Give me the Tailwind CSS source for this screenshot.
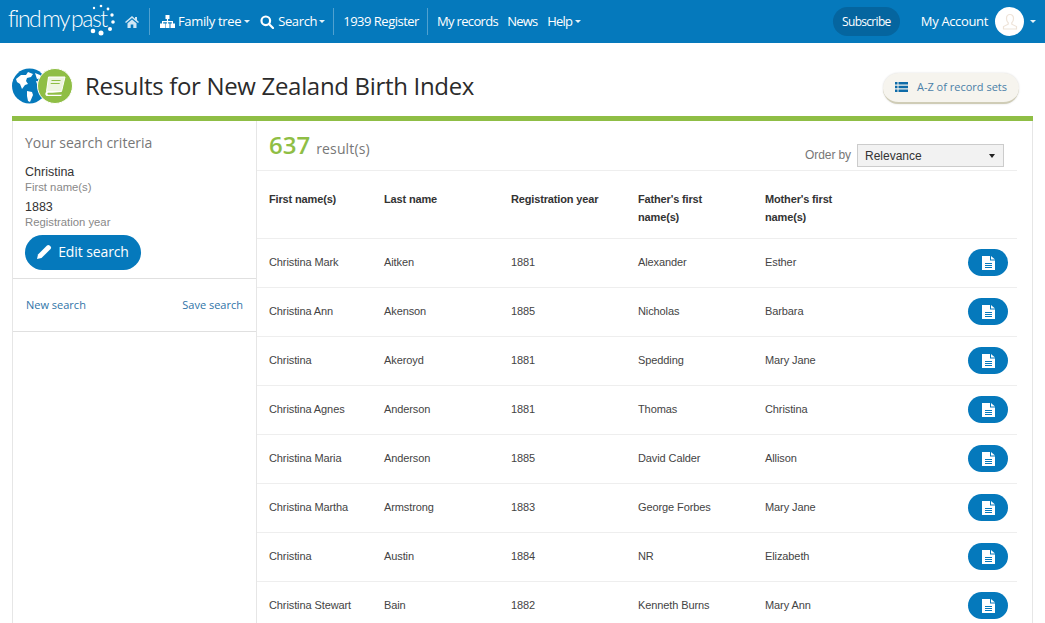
<!DOCTYPE html>
<html lang="en">

<head>
      <meta charset="UTF-8">
      <title>Results for New Zealand Birth Index</title>
      <script src="https://cdn.jsdelivr.net/npm/@tailwindcss/browser@4"></script>
</head>

<body class="bg-white h-[623px] overflow-hidden font-['Liberation_Sans',sans-serif]">
      <!-- Top nav -->
      <header class="h-[43px] bg-[#0579bc] flex items-center text-white font-['Open_Sans',sans-serif] text-[13px] tracking-[-0.35px] pl-2">
            <div class="flex items-center w-[108px] h-full relative">
                  <span class="font-['Lato',sans-serif] font-light text-[23px] tracking-[-1.5px] leading-none -mt-[6px]">find<span class="ml-[2px]">my</span><span class="ml-[2px]">past</span></span>
                  <svg class="absolute left-[80px] top-[2px]" width="30" height="36" viewBox="0 0 30 36" fill="#fff">
                        <circle cx="6" cy="6" r="1.200"/><circle cx="13" cy="4" r="1.300"/><circle cx="20" cy="7" r="1.400"/><circle cx="24" cy="13" r="1.700"/><circle cx="25" cy="20" r="1.800"/><circle cx="22" cy="27" r="2"/><circle cx="13" cy="31" r="2.500"/><circle cx="5" cy="29" r="2.300"/>
                  </svg>
            </div>
            <svg class="ml-[9px]" width="14" height="12" viewBox="0 0 14 12" fill="#cfe6f4"><path d="M7 0 0 6l1 1 6-5 6 5 1-1-2-1.700V1h-2v1.800zM2.500 7.300V12h3.200V8.500h2.600V12h3.200V7.300L7 3.500z"/></svg>
            <div class="w-px h-[27px] bg-white/30 ml-[10px]"></div>
            <svg class="ml-[10px]" width="15" height="13" viewBox="0 0 15 13" fill="#fff"><path d="M5.500 0h4v4h-4zM6.900 4h1.200v2h4.900v2.500h-1.200V7.200H8.100v1.300H6.900V7.200H3.200v1.300H2V6h4.900zM0 8.500h5V13H0zM5.500 8.500h4V13h-4zM10.500 8.500H15V13h-4.500z"/></svg>
            <span class="ml-[3px]">Family tree</span>
            <span class="ml-[3px] border-x-[3px] border-t-[3px] border-x-transparent border-t-white/90"></span>
            <svg class="ml-[10px]" width="14" height="14" viewBox="0 0 14 14" fill="none" stroke="#fff" stroke-width="2.200"><circle cx="5.800" cy="5.800" r="4.300"/><path d="m9 9 4 4" stroke-linecap="round"/></svg>
            <span class="ml-[4px]">Search</span>
            <span class="ml-[2px] border-x-[3px] border-t-[3px] border-x-transparent border-t-white/90"></span>
            <div class="w-px h-[27px] bg-white/30 ml-[8px]"></div>
            <span class="ml-[9px] tracking-[-0.5px]">1939 Register</span>
            <div class="w-px h-[27px] bg-white/30 ml-[8px]"></div>
            <span class="ml-[9px] tracking-[-0.65px]">My records</span>
            <span class="ml-[9px] tracking-[-0.8px]">News</span>
            <span class="ml-[10px] tracking-[-0.8px]">Help</span>
            <span class="ml-[3px] border-x-[3px] border-t-[3px] border-x-transparent border-t-white/90"></span>
            <div class="ml-auto flex items-center">
                  <span class="h-[29px] w-[67px] rounded-full bg-[#05659f] flex items-center justify-center text-[12px] tracking-[-0.7px]">Subscribe</span>
                  <span class="ml-[21px]">My Account</span>
                  <span class="ml-[7px] w-[29px] h-[29px] rounded-full bg-white flex items-center justify-center">
                        <svg width="16" height="18" viewBox="0 0 16 18" fill="none" stroke="#eee3d8" stroke-width="1.200"><path d="M8 1.500c-2.200 0-3.500 1.600-3.500 4 0 2 .8 3.500 1.700 4.300v1.400L1.500 13.500V16h13v-2.500l-4.700-2.300V9.800c.9-.8 1.700-2.300 1.700-4.300 0-2.400-1.300-4-3.500-4z"/></svg>
                  </span>
                  <span class="ml-[6px] mr-[9px] border-x-[3px] border-t-[3px] border-x-transparent border-t-white/90"></span>
            </div>
      </header>

      <!-- Title row -->
      <div class="h-[73px] pt-[12px] flex items-center pl-[12px] pr-[26px] font-['Open_Sans',sans-serif]">
            <div class="w-[61px] h-[36px]">
                  <svg width="61" height="36" viewBox="0 0 61 36">
                        <circle cx="17.500" cy="18" r="17.500" fill="#0579bc"/>
                        <path d="M4 11l5-4 5 0 2-3 5 2-2 3-4 1-1 3 2 3-3 1-3 4-2-5-3-2zM15 23l5 1 1 3-3 7-2-1-1-5zM23 5l5 2 2 3-5 1zM24 13l5 1 2 6-3 3-2-4z" fill="#fff"/>
                        <circle cx="43" cy="18" r="17.500" fill="#8fbe45" stroke="#fff" stroke-width="1"/>
                        <path d="M36.500 9H53l-3.500 14.500H34.500z" fill="#eef5e0" stroke="#fff" stroke-width="1"/>
                        <path d="M34.500 23.500q-2.500 2.500 0 4.500H49l1-1.300H36q-1.500-1 0-2h13.500z" fill="#fff"/>
                        <path d="M39.500 12.500h9M38.700 15.500h9" stroke="#8fbe45" stroke-width="1"/>
                  </svg>
            </div>
            <h1 class="ml-[12px] text-[24px] tracking-[-0.32px] text-[#2b2b2b] leading-none">Results for New Zealand Birth Index</h1>
            <div class="ml-auto mt-[5px] h-[31px] w-[136px] rounded-full bg-[#f6f4ee] border-b-2 border-[#cfccb6] shadow-[0_0_2px_rgba(0,0,0,0.15)] flex items-center justify-center text-[11px] text-[#4a80a8]">
                  <svg class="mr-[9px]" width="13" height="10" viewBox="0 0 13 10" fill="#0e6ba8"><path d="M0 0h2.500v2.500H0zM3.500 0H13v2.500H3.500zM0 3.700h2.500v2.500H0zM3.500 3.700H13v2.500H3.500zM0 7.400h2.500V10H0zM3.500 7.400H13V10H3.500z"/></svg>
                  A-Z of record sets
            </div>
      </div>

      <!-- Results panel -->
      <div class="mx-[12px] border-t-[5px] border-[#8fbe45] flex h-[507px] overflow-hidden">
            <aside class="w-[245px] shrink-0 border-x border-[#e6e6e6]">
                  <div class="h-[158px] pl-[12px] border-b border-[#e0e0e0]">
                        <h2 class="pt-[12px] text-[14px] leading-[20px] tracking-[0.02px] text-[#777] font-['Open_Sans',sans-serif]">Your search criteria</h2>
                        <p class="mt-[12px] text-[12.500px] leading-[15px] text-[#333]">Christina</p>
                        <p class="text-[11.300px] leading-[15px] text-[#888]">First name(s)</p>
                        <p class="mt-[5px] text-[12.500px] leading-[15px] text-[#333]">1883</p>
                        <p class="text-[11.300px] leading-[15px] text-[#888]">Registration year</p>
                        <div class="mt-[5px] h-[35px] w-[116px] rounded-full bg-[#0579bc] text-white flex items-center justify-center font-['Open_Sans',sans-serif] text-[14px] tracking-[-0.1px] pb-[2px]">
                              <svg class="mr-[6px]" width="15" height="15" viewBox="0 0 15 15" fill="#fff"><path d="M0 15l1-4.500L10 1.500q1.300-1.200 2.600 0l1 1q1.100 1.300 0 2.500L4.500 14z"/></svg>
                              Edit search
                        </div>
                  </div>
                  <div class="h-[53px] px-[13px] border-b border-[#e0e0e0] flex items-center justify-between text-[11px] text-[#2f74a8] font-['Open_Sans',sans-serif]">
                        <span>New search</span>
                        <span>Save search</span>
                  </div>
            </aside>

            <main class="flex-1 border-r border-[#e6e6e6] pr-[15px]">
                  <div class="h-[50px] border-b border-[#eee] flex pl-[12px] pr-[13px]">
                        <span class="font-['Open_Sans',sans-serif] font-semibold text-[24px] leading-[48px] text-[#8fbe45]">637</span>
                        <span class="ml-[6px] font-['Open_Sans',sans-serif] text-[14px] leading-[56px] tracking-[0.15px] text-[#777]">result(s)</span>
                        <div class="ml-auto flex items-start pt-[23px]">
                              <span class="text-[12px] leading-[23px] tracking-[-0.1px] text-[#777] mr-[6px]">Order by</span>
                              <div class="w-[147px] h-[23px] bg-[#f2f2f2] border border-[#ccc] flex items-center justify-between pl-[7px] pr-[8px] text-[12px] text-[#333]">
                                    Relevance
                                    <span class="border-x-[3px] border-t-[4px] border-x-transparent border-t-[#222]"></span>
                              </div>
                        </div>
                  </div>
                  <table class="w-full table-fixed text-[11px] tracking-[-0.1px] text-[#444]">
                        <thead>
                              <tr class="h-[67px] border-b border-[#eee] align-top text-[#333] font-bold leading-[18px] text-left tracking-[-0.15px]">
                                    <th class="w-[127px] pl-[12px] pt-[19px]">First name(s)</th>
                                    <th class="w-[127px] pt-[19px]">Last name</th>
                                    <th class="w-[127px] pt-[19px]">Registration year</th>
                                    <th class="w-[127px] pt-[19px] pr-[30px]">Father's first name(s)</th>
                                    <th class="w-[127px] pt-[19px] pr-[30px]">Mother's first name(s)</th>
                                    <th></th>
                              </tr>
                        </thead>
                        <tbody id="rows">
                              <tr class="h-[49px] border-b border-[#eee]"><td class="pl-[12px]">Christina Mark</td><td>Aitken</td><td>1881</td><td>Alexander</td><td>Esther</td><td><div class="ml-auto mr-[9px] w-[40px] h-[27px] rounded-full bg-[#0579bc] flex items-center justify-center"><svg width="13" height="14" viewBox="0 0 13 14"><path fill="#fff" d="M0 0h8v4.500h5V14H0z"/><path fill="#fff" d="M9 0l4 3.500H9z"/><path d="M3 7.500h7M3 9.500h7M3 11.500h7" stroke="#0579bc"/></svg></div></td></tr>
                              <tr class="h-[49px] border-b border-[#eee]"><td class="pl-[12px]">Christina Ann</td><td>Akenson</td><td>1885</td><td>Nicholas</td><td>Barbara</td><td><div class="ml-auto mr-[9px] w-[40px] h-[27px] rounded-full bg-[#0579bc] flex items-center justify-center"><svg width="13" height="14" viewBox="0 0 13 14"><path fill="#fff" d="M0 0h8v4.500h5V14H0z"/><path fill="#fff" d="M9 0l4 3.500H9z"/><path d="M3 7.500h7M3 9.500h7M3 11.500h7" stroke="#0579bc"/></svg></div></td></tr>
                              <tr class="h-[49px] border-b border-[#eee]"><td class="pl-[12px]">Christina</td><td>Akeroyd</td><td>1881</td><td>Spedding</td><td>Mary Jane</td><td><div class="ml-auto mr-[9px] w-[40px] h-[27px] rounded-full bg-[#0579bc] flex items-center justify-center"><svg width="13" height="14" viewBox="0 0 13 14"><path fill="#fff" d="M0 0h8v4.500h5V14H0z"/><path fill="#fff" d="M9 0l4 3.500H9z"/><path d="M3 7.500h7M3 9.500h7M3 11.500h7" stroke="#0579bc"/></svg></div></td></tr>
                              <tr class="h-[49px] border-b border-[#eee]"><td class="pl-[12px]">Christina Agnes</td><td>Anderson</td><td>1881</td><td>Thomas</td><td>Christina</td><td><div class="ml-auto mr-[9px] w-[40px] h-[27px] rounded-full bg-[#0579bc] flex items-center justify-center"><svg width="13" height="14" viewBox="0 0 13 14"><path fill="#fff" d="M0 0h8v4.500h5V14H0z"/><path fill="#fff" d="M9 0l4 3.500H9z"/><path d="M3 7.500h7M3 9.500h7M3 11.500h7" stroke="#0579bc"/></svg></div></td></tr>
                              <tr class="h-[49px] border-b border-[#eee]"><td class="pl-[12px]">Christina Maria</td><td>Anderson</td><td>1885</td><td>David Calder</td><td>Allison</td><td><div class="ml-auto mr-[9px] w-[40px] h-[27px] rounded-full bg-[#0579bc] flex items-center justify-center"><svg width="13" height="14" viewBox="0 0 13 14"><path fill="#fff" d="M0 0h8v4.500h5V14H0z"/><path fill="#fff" d="M9 0l4 3.500H9z"/><path d="M3 7.500h7M3 9.500h7M3 11.500h7" stroke="#0579bc"/></svg></div></td></tr>
                              <tr class="h-[49px] border-b border-[#eee]"><td class="pl-[12px]">Christina Martha</td><td>Armstrong</td><td>1883</td><td>George Forbes</td><td>Mary Jane</td><td><div class="ml-auto mr-[9px] w-[40px] h-[27px] rounded-full bg-[#0579bc] flex items-center justify-center"><svg width="13" height="14" viewBox="0 0 13 14"><path fill="#fff" d="M0 0h8v4.500h5V14H0z"/><path fill="#fff" d="M9 0l4 3.500H9z"/><path d="M3 7.500h7M3 9.500h7M3 11.500h7" stroke="#0579bc"/></svg></div></td></tr>
                              <tr class="h-[49px] border-b border-[#eee]"><td class="pl-[12px]">Christina</td><td>Austin</td><td>1884</td><td>NR</td><td>Elizabeth</td><td><div class="ml-auto mr-[9px] w-[40px] h-[27px] rounded-full bg-[#0579bc] flex items-center justify-center"><svg width="13" height="14" viewBox="0 0 13 14"><path fill="#fff" d="M0 0h8v4.500h5V14H0z"/><path fill="#fff" d="M9 0l4 3.500H9z"/><path d="M3 7.500h7M3 9.500h7M3 11.500h7" stroke="#0579bc"/></svg></div></td></tr>
                              <tr class="h-[49px] border-b border-[#eee]"><td class="pl-[12px]">Christina Stewart</td><td>Bain</td><td>1882</td><td>Kenneth Burns</td><td>Mary Ann</td><td><div class="ml-auto mr-[9px] w-[40px] h-[27px] rounded-full bg-[#0579bc] flex items-center justify-center"><svg width="13" height="14" viewBox="0 0 13 14"><path fill="#fff" d="M0 0h8v4.500h5V14H0z"/><path fill="#fff" d="M9 0l4 3.500H9z"/><path d="M3 7.500h7M3 9.500h7M3 11.500h7" stroke="#0579bc"/></svg></div></td></tr>
                        </tbody>
                  </table>
            </main>
      </div>
</body>

</html>
